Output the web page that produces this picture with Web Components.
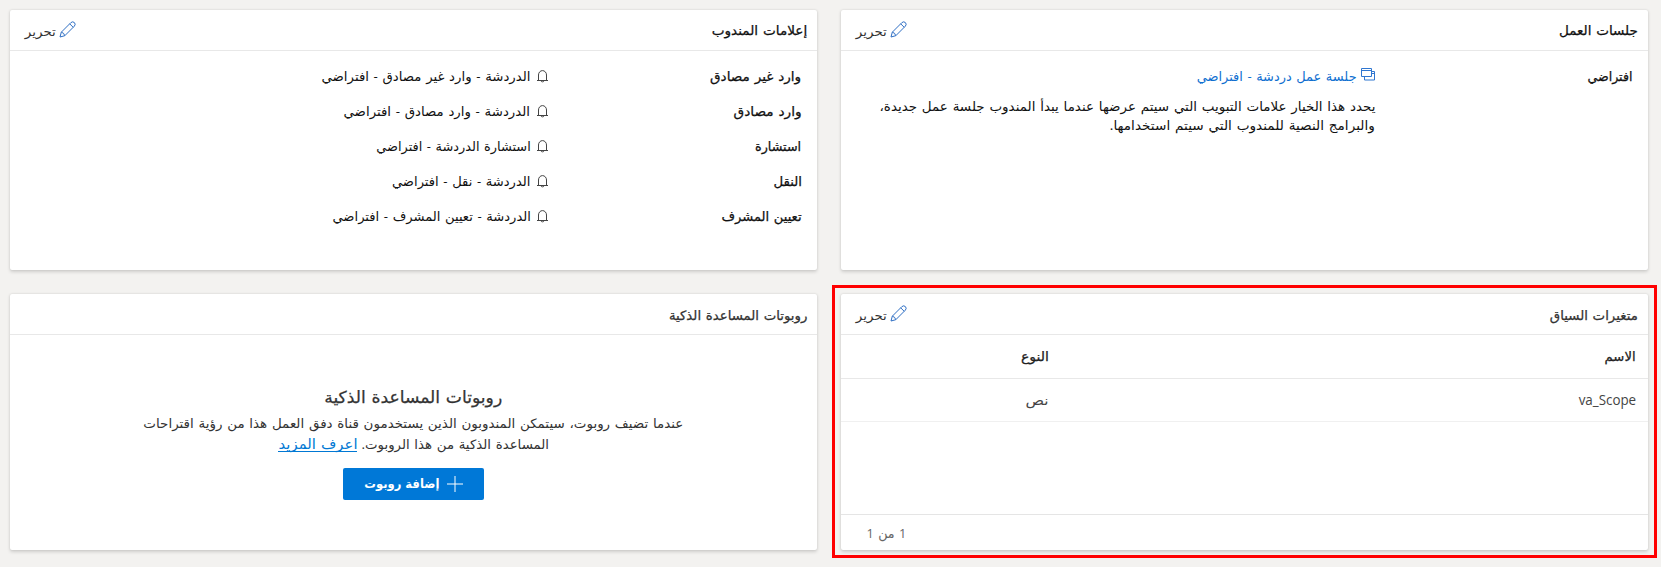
<!DOCTYPE html>
<html lang="ar" dir="rtl">
<head>
<meta charset="utf-8">
<title>قناة دفق العمل</title>
<style>
html,body{margin:0;height:567px;overflow:hidden;background:#f3f2f0}
body{font-family:"Open Sans","DejaVu Sans",sans-serif;font-size:13px;color:#111}
</style>
</head>
<body>
<work-stream></work-stream>
<script>
const define = (name, html, setup) => {
  const t = document.createElement('template');
  t.innerHTML = html;
  customElements.define(name, class extends HTMLElement {
    connectedCallback() {
      if (this.shadowRoot) return;
      this.attachShadow({mode: 'open'}).append(t.content.cloneNode(true));
      if (setup) setup(this, this.shadowRoot);
    }
  });
};

/* One line of text set to a given measure. */
define('fit-text', `<style>
:host{display:block;flex:none;height:20px;line-height:20px;white-space:nowrap;font-size:13px;word-spacing:1.2px}
:host([semi]){-webkit-text-stroke:.25px currentColor}
:host([bold]){font-weight:700}
span{display:inline-block;transform-origin:100% 50%}
</style><span><slot></slot></span>`, (el, root) => {
  const s = root.querySelector('span'), w = +el.getAttribute('w');
  if (el.hasAttribute('size')) el.style.fontSize = el.getAttribute('size') + 'px';
  el.style.width = w + 'px';
  s.style.transform = `scaleX(${w / s.getBoundingClientRect().width})`;
});

const icons = {
  pencil: [17, 17, '<path d="M1 16 2.3 11.2 11.9 1.6Q13.8 0 15.4 1.6 17 3.2 15.4 5.1L5.8 14.7ZM2.3 11.2Q5 11.6 5.8 14.7M10.7 2.8 14.2 6.3"/>'],
  bell: [11, 13, '<path d="M0 10.5H11M1.5 10.5V5a4 4.4 0 0 1 8 0V10.5M4 11a1.6 1.3 0 0 0 3 0"/>'],
  windows: [14, 13, '<path d="M.5.5H10.5V8.5H.5ZM.5 2.5H10.5M10.5 3.5H13.5V12H3.5V8.5M10.5 5.5H13.5"/>'],
  plus: [16, 16, '<path d="M8 0V16M0 8H16"/>']
};
define('ui-icon', `<style>
:host{display:block;flex:none}
svg{display:block;fill:none;stroke:currentColor;stroke-width:1}
</style><svg></svg>`, (el, root) => {
  const [w, h, d] = icons[el.getAttribute('name')], s = root.querySelector('svg');
  s.setAttribute('width', w); s.setAttribute('height', h);
  s.setAttribute('viewBox', `0 0 ${w} ${h}`); s.innerHTML = d;
});

define('edit-button', `<style>
:host{display:flex;align-items:flex-start;gap:3.5px;color:#333}
ui-icon{color:#2f6fc4}
fit-text{margin-top:1px}
</style><ui-icon name="pencil"></ui-icon><fit-text w="31" size="12.5">تحرير</fit-text>`);

define('panel-card', `<style>
:host{display:flex;flex-direction:column;position:relative;background:#fff;border-radius:2px;box-shadow:0 1.6px 3.6px rgba(0,0,0,.15),0 0 2px rgba(0,0,0,.1)}
header{display:flex;justify-content:space-between;align-items:flex-start;height:30px;padding:10px 10px 0 14.5px;border-bottom:1px solid #e8e8e8}
::slotted(edit-button){margin-top:1px}
.body{flex:1;display:flex;flex-direction:column;min-height:0}
:host([marked])::after{content:"";position:absolute;inset:-9px -9px -8px;border:3px solid #f00}
</style><header><slot name="title"></slot><slot name="action"></slot></header><div class="body"><slot></slot></div>`);

define('setting-rows', `<style>
:host{display:flex;flex-direction:column;gap:15px;padding:15px 15.5px 0 0}
</style><slot></slot>`);

define('setting-row', `<style>
:host{display:grid;grid-template-columns:var(--label,254px) 1fr}
.value{display:flex;flex-direction:column}
</style><slot name="label"></slot><div class="value"><slot></slot></div>`);

define('icon-line', `<style>
:host{display:flex;align-items:flex-start;gap:6px}
ui-icon{margin-top:4px;color:#444}
:host([link]){color:#0f6fd0;gap:4px}
:host([link]) ui-icon{margin-top:2px;color:#2f76d0}
</style><slot></slot>`, (el, root) => {
  const n = document.createElement('ui-icon');
  n.setAttribute('name', el.hasAttribute('link') ? 'windows' : 'bell');
  root.querySelector('slot').before(n);
});

define('context-table', `<style>
:host{display:flex;flex-direction:column;flex:1}
.row{display:grid;grid-template-columns:587px 1fr;padding-right:12px;box-sizing:border-box}
.head{height:44px;padding-top:11px;border-bottom:1px solid #e8e8e8;color:#222}
.data{height:43px;padding-top:11px;border-bottom:1px solid #f0f0f0;color:#444}
.foot{display:flex;justify-content:flex-end;box-sizing:border-box;height:36px;padding:8px 0 0 25.5px;margin-top:auto;border-top:1px solid #e5e5e5;color:#666}
</style>
<div class="row head"><fit-text semi w="31">الاسم</fit-text><fit-text semi w="28">النوع</fit-text></div>
<div class="row data"><fit-text w="57.5" size="14">va_Scope</fit-text><fit-text w="23">نص</fit-text></div>
<div class="foot"><fit-text w="40" size="13.5">1 من 1</fit-text></div>`);

define('bot-empty', `<style>
:host{display:flex;flex-direction:column;align-items:center;color:#333}
.h{margin-top:52px}
.l1{margin-top:6px}
.l2{display:flex;gap:4px;margin-top:1px}
a{color:#0078d4;border-bottom:1px solid #0078d4;height:17px;display:block}
button{all:unset;box-sizing:border-box;display:flex;align-items:center;gap:8px;width:141px;height:32px;margin-top:14px;padding-right:21px;border-radius:2px;background:#0078d7;color:#fff}
</style>
<fit-text class="h" semi w="178" size="16.5">روبوتات المساعدة الذكية</fit-text>
<fit-text class="l1" w="540">عندما تضيف روبوت، سيتمكن المندوبون الذين يستخدمون قناة دفق العمل هذا من رؤية اقتراحات</fit-text>
<div class="l2"><fit-text w="187.5">المساعدة الذكية من هذا الروبوت.</fit-text><a><fit-text w="79" size="14">اعرف المزيد</fit-text></a></div>
<button><ui-icon name="plus"></ui-icon><fit-text bold w="75" size="12.5">إضافة روبوت</fit-text></button>`);

const alerts = [
  ['وارد غير مصادق', 91, 'الدردشة - وارد غير مصادق - افتراضي', 209],
  ['وارد مصادق', 68, 'الدردشة - وارد مصادق - افتراضي', 186.5],
  ['استشارة', 46, 'استشارة الدردشة - افتراضي', 154.5],
  ['النقل', 28.5, 'الدردشة - نقل - افتراضي', 138.5],
  ['تعيين المشرف', 80, 'الدردشة - تعيين المشرف - افتراضي', 198.5]
];
define('work-stream', `<style>
:host{display:grid;grid-template-columns:807px 807px;grid-template-rows:260px 256px;gap:24px;padding:10px 13px 0 10px}
.wide{--label:257.5px}
.p1{margin-top:10px}
.p2{margin-top:-1px}
.soft{color:#333;margin-top:1px}
</style>
<panel-card>
  <fit-text slot="title" semi w="79">جلسات العمل</fit-text><edit-button slot="action"></edit-button>
  <setting-rows class="wide"><setting-row>
    <fit-text slot="label" semi w="45">افتراضي</fit-text>
    <icon-line link><fit-text w="160">جلسة عمل دردشة - افتراضي</fit-text></icon-line>
    <fit-text class="p1" w="496">يحدد هذا الخيار علامات التبويب التي سيتم عرضها عندما يبدأ المندوب جلسة عمل جديدة،</fit-text>
    <fit-text class="p2" w="265">والبرامج النصية للمندوب التي سيتم استخدامها.</fit-text>
  </setting-row></setting-rows>
</panel-card>
<panel-card>
  <fit-text slot="title" semi w="95.5">إعلامات المندوب</fit-text><edit-button slot="action"></edit-button>
  <setting-rows>${alerts.map(a => `<setting-row><fit-text slot="label" semi w="${a[1]}">${a[0]}</fit-text><icon-line><fit-text w="${a[3]}">${a[2]}</fit-text></icon-line></setting-row>`).join('')}</setting-rows>
</panel-card>
<panel-card marked>
  <fit-text class="soft" slot="title" semi w="88">متغيرات السياق</fit-text><edit-button slot="action"></edit-button>
  <context-table></context-table>
</panel-card>
<panel-card>
  <fit-text class="soft" slot="title" semi w="138.5">روبوتات المساعدة الذكية</fit-text>
  <bot-empty></bot-empty>
</panel-card>`);
</script>
</body>
</html>
